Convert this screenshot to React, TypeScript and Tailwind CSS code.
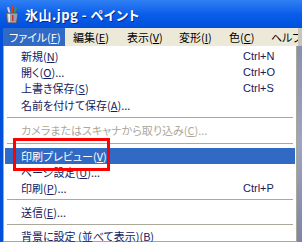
import React from "react";

type Row =
  | { sep: true; h: string; pt: string }
  | {
      sep?: false;
      h: string;
      t: string;
      k: string;
      a: string;
      s?: string;
      disabled?: boolean;
      selected?: boolean;
    };

const rows: Row[] = [
  { h: "h-[16px]", t: "新規(", k: "N", a: ")", s: "Ctrl+N" },
  { h: "h-[16px]", t: "開く(", k: "O", a: ")...", s: "Ctrl+O" },
  { h: "h-[17px]", t: "上書き保存(", k: "S", a: ")", s: "Ctrl+S" },
  { h: "h-[17px]", t: "名前を付けて保存(", k: "A", a: ")..." },
  { sep: true, h: "h-[8px]", pt: "pt-[3px]" },
  { h: "h-[17px]", t: "カメラまたはスキャナから取り込み(", k: "C", a: ")...", disabled: true },
  { sep: true, h: "h-[9px]", pt: "pt-[4px]" },
  { h: "h-[16px]", t: "印刷プレビュー(", k: "V", a: ")", selected: true },
  { h: "h-[16px]", t: "ページ設定(", k: "U", a: ")..." },
  { h: "h-[16px]", t: "印刷(", k: "P", a: ")...", s: "Ctrl+P" },
  { sep: true, h: "h-[8px]", pt: "pt-[3px]" },
  { h: "h-[16px]", t: "送信(", k: "E", a: ")..." },
  { sep: true, h: "h-[8px]", pt: "pt-[4px]" },
  { h: "h-[16px]", t: "背景に設定 (並べて表示)(", k: "B", a: ")" },
];

function PaintIcon() {
  return (
    <svg width="14" height="18" viewBox="0 0 14 18">
      <rect x="3" y="1" width="2" height="9" fill="#d8d8d8" transform="rotate(-15 4 5)" />
      <rect x="6" y="0" width="2" height="10" fill="#e83030" transform="rotate(5 7 5)" />
      <rect x="9" y="1" width="2" height="9" fill="#2ca02c" transform="rotate(18 10 5)" />
      <path d="M1 7 L13 7 L11.5 17 L2.5 17 Z" fill="#9aa0aa" stroke="#4a4f5a" strokeWidth="0.8" />
      <path d="M3 8 L5 8 L5 16 L3.6 16 Z" fill="#e6e9ee" />
      <rect x="7" y="9" width="1.5" height="6" fill="#d03030" />
    </svg>
  );
}

export default function App() {
  return (
    <div className="relative w-[302px] h-[242px] overflow-hidden bg-[#0054E3] font-['Noto_Sans_CJK_JP',sans-serif] [font-feature-settings:'palt']">
      {/* Title bar */}
      <div className="h-[28px] flex items-center bg-gradient-to-b from-[#2f7ff3] via-[#0a5ee9] to-[#0050dc]">
        <div className="ml-[5px] mt-[1px] flex items-center">
          <PaintIcon />
        </div>
        <div className="ml-[6px] text-white font-bold text-[13px] leading-none tracking-[0.5px] whitespace-nowrap [text-shadow:1px_1px_0_#0a2a8a]">
          氷山.jpg - ペイント
        </div>
      </div>

      {/* Menu bar */}
      <div className="flex h-[18px]">
        <div className="w-[3px] bg-[#0050dc]" />
        <div className="flex-1 flex items-center bg-[#ECE9D8] text-[11px] leading-none text-black whitespace-nowrap overflow-hidden">
          <div className="w-[62px] shrink-0 h-full flex items-center pl-[6px] bg-[#316AC5] text-white">
            ファイル(<span className="underline underline-offset-1">F</span>)
          </div>
          <div className="w-[54px] shrink-0 pl-[8px]">
            編集(<span className="underline underline-offset-1">E</span>)
          </div>
          <div className="w-[52px] shrink-0 pl-[8px]">
            表示(<span className="underline underline-offset-1">V</span>)
          </div>
          <div className="w-[50px] shrink-0 pl-[8px]">
            変形(<span className="underline underline-offset-1">I</span>)
          </div>
          <div className="w-[42px] shrink-0 pl-[8px]">
            色(<span className="underline underline-offset-1">C</span>)
          </div>
          <div className="pl-[8px]">ヘルプ</div>
        </div>
        <div className="w-[4px] bg-[#c9c6ba]" />
      </div>

      {/* Body */}
      <div className="flex h-[196px]">
        <div className="w-[3px] bg-[#0050dc]" />
        <div className="flex-1 bg-white border border-t-0 border-[#ACA899] pt-[2px] text-[11px] leading-none text-[#14205e]">
          {rows.map((r, i) =>
            r.sep ? (
              <div key={i} className={r.h + " " + r.pt + " px-[3px]"}>
                <div className="h-[1px] w-full bg-[#ACA899]" />
              </div>
            ) : (
              <div
                key={i}
                className={
                  r.h +
                  " mx-[1px] flex items-center whitespace-nowrap " +
                  (r.selected ? "bg-[#316AC5] text-white" : r.disabled ? "text-[#ACA899]" : "")
                }
              >
                <div className="flex-1 pl-[16px]">
                  {r.t}
                  <span className="underline underline-offset-1">{r.k}</span>
                  {r.a}
                </div>
                {r.s ? (
                  <div className="w-[52px] font-['Liberation_Sans',sans-serif] text-[11px]">{r.s}</div>
                ) : null}
              </div>
            )
          )}
        </div>
        <div className="w-[5px] bg-gradient-to-b from-[#8790ad] via-[#9ea5c0] to-[#7d85a6]" />
      </div>

      {/* red annotation box */}
      <div className="absolute left-[13px] top-[138px] w-[97px] h-[33px] border-[3px] border-[#FF0000]" />
    </div>
  );
}
